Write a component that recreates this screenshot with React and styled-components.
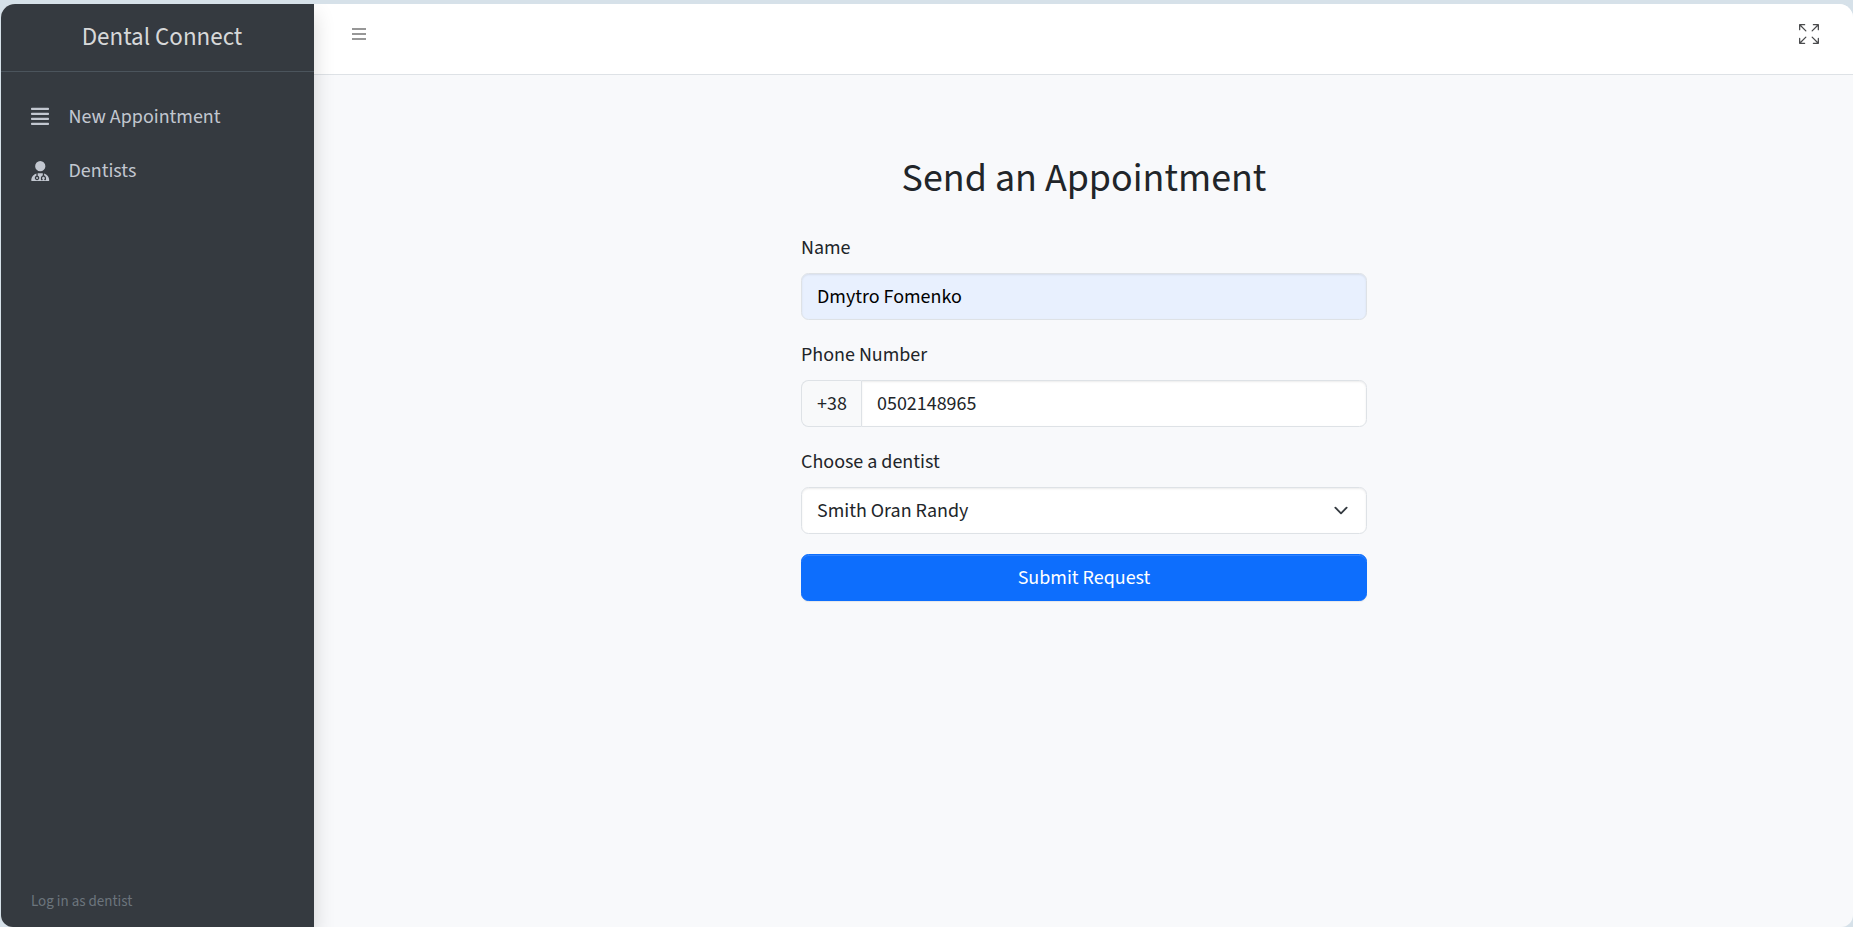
import React from "react";
import styled, { createGlobalStyle } from "styled-components";
import { FaUserDoctor } from "react-icons/fa6";
import { BsArrowsFullscreen } from "react-icons/bs";

const GlobalStyle = createGlobalStyle`
  *, *::before, *::after { box-sizing: border-box; }
  body {
    margin: 0;
    background: #d6e1e9;
    color: #212529;
    font-family: "Source Sans 3", "Noto Sans CJK SC", "Liberation Sans", sans-serif;
    font-size: 20px;
    line-height: 30px;
    overflow: hidden;
  }
`;

const Frame = styled.div`
  display: flex;
  height: 923px;
  margin: 4px 0 0 1px;
  border-radius: 14px 14px 12px 12px;
  overflow: hidden;
  background: #f8f9fb;
`;

const Sidebar = styled.aside`
  display: flex;
  flex-direction: column;
  flex: 0 0 313px;
  background: #353a40;
  box-shadow: 0 10px 20px rgba(0, 0, 0, 0.16);
  z-index: 1;
`;

const Brand = styled.div`
  height: 68px;
  padding: 14px 0 0 9px;
  border-bottom: 1px solid #4b545c;
  color: #d7d8d9;
  font-size: 25px;
  line-height: 38px;
  text-align: center;
`;

const Menu = styled.nav`
  display: flex;
  flex-direction: column;
  flex: 1;
  gap: 4px;
  padding: 20px 10px;
`;

const MenuItem = styled.a`
  display: flex;
  align-items: center;
  gap: 18px;
  height: 50px;
  padding-left: 19px;
  color: #c2c7d0;
  svg { flex: none; }
`;

const LoginLink = styled.a`
  padding: 0 30px 13px;
  color: #6c757d;
  font-size: 15px;
  line-height: 24px;
`;

const Main = styled.main`
  flex: 1;
  display: flex;
  flex-direction: column;
`;

const TopBar = styled.header`
  display: flex;
  justify-content: space-between;
  height: 71px;
  padding: 20px 34px 0 35px;
  background: #fff;
  border-bottom: 1px solid #dee2e6;
`;

const ExpandIcon = styled(BsArrowsFullscreen)`
  color: #4a4b4d;
`;

const Form = styled.form`
  width: 566px;
  margin: 77px auto 0 487px;
`;

const Title = styled.h2`
  margin: 0 0 28px;
  color: #212529;
  font-size: 40px;
  font-weight: 400;
  line-height: 53px;
  text-align: center;
`;

const Field = styled.div`
  margin-bottom: 20px;
`;

const Label = styled.label`
  display: block;
  margin-bottom: 10px;
`;

const Control = styled.div`
  display: flex;
  align-items: center;
  justify-content: space-between;
  height: 47px;
  padding: 0 15px;
  border: 1px solid #dee2e6;
  border-radius: 7.5px;
  background: ${(p) => (p.$filled ? "#e8f0fe" : "#fff")};
  color: ${(p) => (p.$filled ? "#000" : "#212529")};
  box-shadow: inset 0 1px 2px rgba(0, 0, 0, 0.075);
`;

const InputGroup = styled.div`
  display: flex;
  ${Control} {
    flex: 1;
    border-radius: 0 7.5px 7.5px 0;
  }
`;

const Prefix = styled.span`
  width: 60px;
  height: 47px;
  padding: 8px 0 0 15px;
  border: 1px solid #dee2e6;
  border-right: 0;
  border-radius: 7.5px 0 0 7.5px;
  background: #f8f9fa;
`;

const Submit = styled.button`
  display: block;
  width: 100%;
  height: 47px;
  padding: 0;
  border: 1px solid #0d6efd;
  border-radius: 7.5px;
  background: #0d6efd;
  box-shadow: inset 0 1px 0 rgba(255, 255, 255, 0.15), 0 1px 1px rgba(0, 0, 0, 0.075);
  color: #fff;
  font: inherit;
`;

const ListIcon = () => (
  <svg width="20" height="20" viewBox="0 0 20 20" fill="#979797">
    <rect x="3" y="4" width="14" height="2" />
    <rect x="3" y="9" width="14" height="2" />
    <rect x="3" y="14" width="14" height="2" />
  </svg>
);

const JustifyIcon = () => (
  <svg width="20.5" height="20" viewBox="0 0 20.5 20" fill="currentColor">
    <rect x="1" y="0.7" width="18" height="2.4" rx="0.8" />
    <rect x="1" y="5.7" width="18" height="2.4" rx="0.8" />
    <rect x="1" y="10.7" width="18" height="2.4" rx="0.8" />
    <rect x="1" y="15.7" width="18" height="2.4" rx="0.8" />
  </svg>
);

const Chevron = () => (
  <svg width="20" height="15" viewBox="0 0 16 16" fill="none" stroke="#343a40" strokeWidth="2" strokeLinecap="round" strokeLinejoin="round">
    <path d="m2 5 6 6 6-6" />
  </svg>
);

export default function App() {
  return (
    <>
      <GlobalStyle />
      <Frame>
        <Sidebar>
          <Brand>Dental Connect</Brand>
          <Menu>
            <MenuItem>
              <JustifyIcon />
              New Appointment
            </MenuItem>
            <MenuItem>
              <FaUserDoctor size={20.5} />
              Dentists
            </MenuItem>
          </Menu>
          <LoginLink>Log in as dentist</LoginLink>
        </Sidebar>
        <Main>
          <TopBar>
            <ListIcon />
            <ExpandIcon size={20} />
          </TopBar>
          <Form>
            <Title>Send an Appointment</Title>
            <Field>
              <Label>Name</Label>
              <Control $filled>Dmytro Fomenko</Control>
            </Field>
            <Field>
              <Label>Phone Number</Label>
              <InputGroup>
                <Prefix>+38</Prefix>
                <Control>0502148965</Control>
              </InputGroup>
            </Field>
            <Field>
              <Label>Choose a dentist</Label>
              <Control>
                Smith Oran Randy
                <Chevron />
              </Control>
            </Field>
            <Submit type="button">Submit Request</Submit>
          </Form>
        </Main>
      </Frame>
    </>
  );
}
